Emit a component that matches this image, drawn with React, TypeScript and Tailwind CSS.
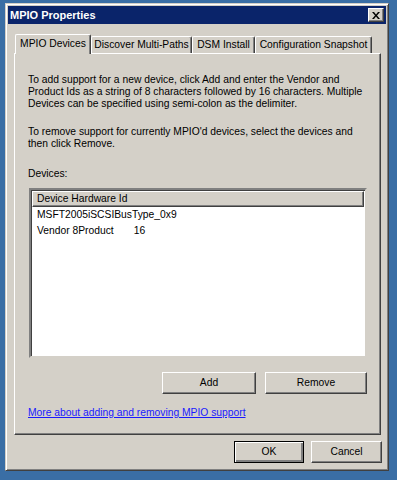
const face = 'bg-[#d4d0c8]'
const raised =
  'border border-t-white border-l-white border-r-[#404040] border-b-[#404040] shadow-[inset_-1px_-1px_#808080]'

function Button({ label, width, isDefault = false }: { label: string; width: string; isDefault?: boolean }) {
  return (
    <button
      className={`${width} h-[22px] ${face} ${
        isDefault
          ? 'border border-black shadow-[inset_1px_1px_white,inset_-2px_-2px_#808080]'
          : raised
      } text-black flex items-center justify-center`}
    >
      {label}
    </button>
  )
}

function Tab({ label, width, active = false }: { label: string; width: string; active?: boolean }) {
  if (active) {
    return (
      <div
        className={`${width} h-[20px] ${face} relative z-10 -mb-[1px] whitespace-nowrap border-t border-l border-t-white border-l-white border-r border-r-[#404040] shadow-[inset_-1px_0_#808080] rounded-t-[2px] flex items-center justify-center pb-[2px]`}
      >
        {label}
      </div>
    )
  }
  return (
    <div
      className={`${width} h-[17px] ${face} whitespace-nowrap border-t border-l border-t-white border-l-white border-r border-r-[#404040] shadow-[inset_-1px_0_#808080] rounded-t-[2px] flex items-center justify-center`}
    >
      {label}
    </div>
  )
}

export default function App() {
  return (
    <div className="w-[397px] h-[480px] bg-[#3a6ea5] pt-[3px] pl-[5px] font-['Liberation_Sans',Arial,sans-serif] text-[10.3px] text-black">
      <div
        className={`w-[384px] h-[468px] ${face} border border-t-[#d4d0c8] border-l-[#d4d0c8] border-r-[#404040] border-b-[#404040] shadow-[inset_1px_1px_white,inset_-1px_-1px_#808080] p-[2px] flex flex-col`}
      >
        {/* title bar */}
        <div className="h-[18px] bg-[#0a246a] flex items-center justify-between pl-[2px] pr-[2px]">
          <span className="text-white font-bold text-[11px]">MPIO Properties</span>
          <button className={`w-[16px] h-[14px] ${face} ${raised} flex items-center justify-center`}>
            <svg width="8" height="7" viewBox="0 0 8 7">
              <path d="M0 0h2l2 2.5L6 0h2L5 3.5 8 7H6L4 4.5 2 7H0l3-3.5z" fill="black" />
            </svg>
          </button>
        </div>

        {/* tabs */}
        <div className="mt-[9px] pl-[7px] flex items-end h-[20px]">
          <Tab label="MPIO Devices" width="w-[76px]" active />
          <Tab label="Discover Multi-Paths" width="w-[101px]" />
          <Tab label="DSM Install" width="w-[63px]" />
          <Tab label="Configuration Snapshot" width="w-[117px]" />
        </div>

        {/* tab panel */}
        <div
          className={`ml-[6px] w-[367px] h-[382px] ${face} border border-t-white border-l-white border-r-[#404040] border-b-[#404040] shadow-[inset_-1px_-1px_#808080] pt-[20px] pl-[13px] pr-[12px] flex flex-col`}
        >
          <p className="leading-[12px]">
            To add support for a new device, click Add and enter the Vendor and Product Ids as a string of 8
            characters followed by 16 characters. Multiple Devices can be specified using semi-colon as the
            delimiter.
          </p>
          <p className="leading-[12px] mt-[16px]">
            To remove support for currently MPIO'd devices, select the devices and then click Remove.
          </p>
          <p className="leading-[12px] mt-[18px]">Devices:</p>

          {/* list view */}
          <div className="mt-[8px] ml-[1px] w-[338px] h-[170px] bg-white border-2 border-t-[#808080] border-l-[#808080] border-r-[#d4d0c8] border-b-[#d4d0c8] shadow-[inset_1px_1px_#404040] p-[1px]">
            <div className={`h-[16px] ${face} ${raised} flex items-center pl-[4px]`}>Device Hardware Id</div>
            <div className="pl-[5px]">
              <div className="h-[16px] flex items-center">MSFT2005iSCSIBusType_0x9</div>
              <div className="h-[16px] flex items-center">
                <span>Vendor 8Product</span>
                <span className="ml-[20px]">16</span>
              </div>
            </div>
          </div>

          <div className="mt-[14px] flex justify-end gap-[9px] w-[339px]">
            <Button label="Add" width="w-[94px]" />
            <Button label="Remove" width="w-[102px]" />
          </div>

          <a className="mt-[13px] leading-[12px] text-[#1a1aff] underline underline-offset-1 self-start cursor-pointer">
            More about adding and removing MPIO support
          </a>
        </div>

        {/* dialog buttons */}
        <div className="mt-[6px] flex justify-end gap-[7px] pr-[4px]">
          <Button label="OK" width="w-[70px]" isDefault />
          <Button label="Cancel" width="w-[71px]" />
        </div>
      </div>
    </div>
  )
}
